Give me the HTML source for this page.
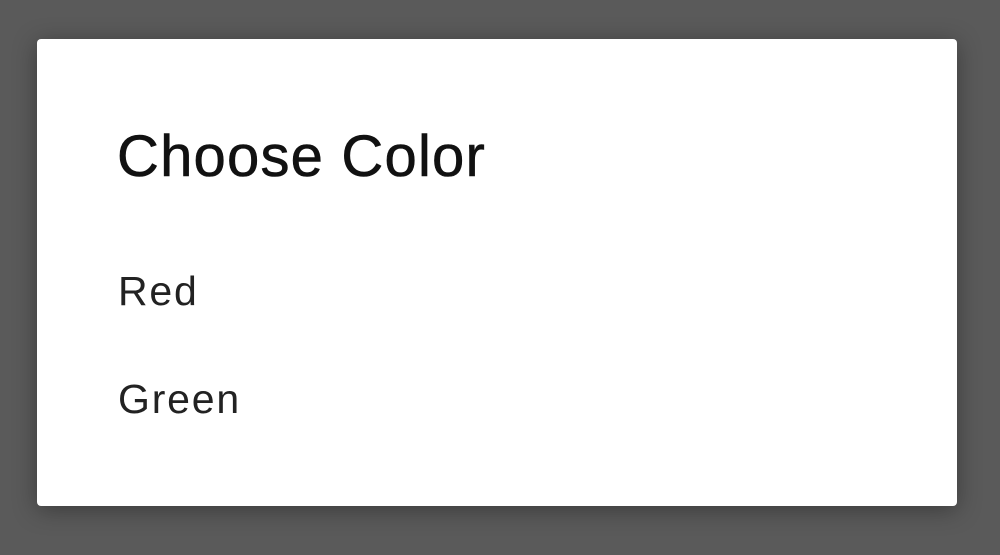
<!DOCTYPE html>
<html><head><style>
html,body{margin:0;padding:0;width:1000px;height:555px;background:#5a5a5a;overflow:hidden;font-family:"Liberation Sans",Arial,sans-serif;}
.card{position:absolute;left:37px;top:39px;width:920px;height:467px;background:#fff;border-radius:4px;box-shadow:0 4px 24px rgba(0,0,0,0.35);}
.t{position:absolute;left:80px;top:89px;font-size:58px;color:#111;line-height:1;letter-spacing:1.2px;-webkit-text-stroke:0.6px #111;}
.i{position:absolute;left:81px;font-size:41px;color:#222;line-height:1;letter-spacing:1.8px;}
</style></head><body>
<div class="card">
<div class="t">Choose Color</div>
<div class="i" style="top:232px">Red</div>
<div class="i" style="top:340px">Green</div>
</div>
</body></html>
